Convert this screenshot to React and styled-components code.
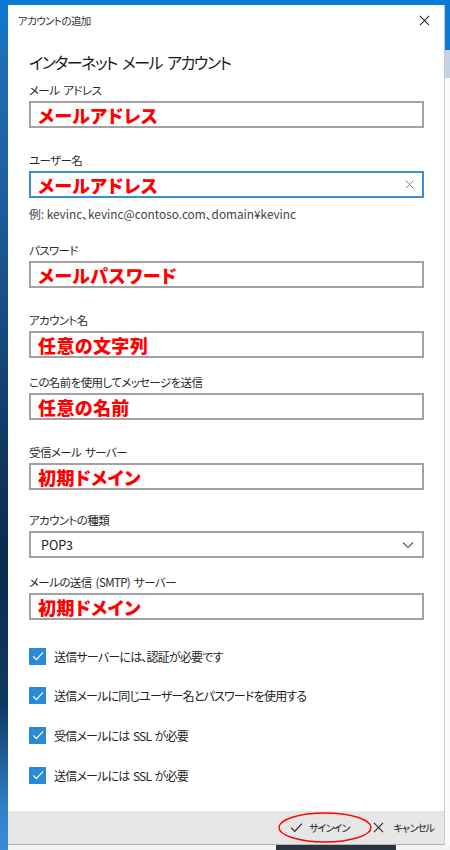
import React from "react";
import styled, { createGlobalStyle } from "styled-components";

const GlobalStyle = createGlobalStyle`
    html, body {
        margin: 0;
        padding: 0;
        background: #f4f4f4;
    }
    body {
        font-family: "Noto Sans CJK JP", "Noto Sans", sans-serif;
        font-feature-settings: "palt";
        color: #222;
    }
`;

// Desktop behind the dialog
const Desktop = styled.div`
    width: 450px;
    height: 850px;
    display: grid;
    grid-template-columns: 8px 437px 5px;
    grid-template-rows: 5px 840px 5px;
    overflow: hidden;
`;

const TopStrip = styled.div`
    grid-column: 1 / 4;
    background: #0a78d7;
`;

const LeftStrip = styled.div`
    grid-row: 2 / 4;
    background: linear-gradient(
        180deg,
        #0a78d7 0px,
        #1f6eb6 50px,
        #1c5d9c 200px,
        #103863 440px,
        #0b2a4d 560px,
        #0f3964 700px,
        #2f80c8 800px,
        #3a8cd4 850px
    );
`;

const RightStrip = styled.div`
    display: flex;
    flex-direction: column;
    background: #fbfbfb;
`;

const RightBlue = styled.div`
    height: 45px;
    background: #0a78d7;
`;

const RightBand = styled.div`
    height: 28px;
    background: #c3d3e3;
`;

const BottomStrip = styled.div`
    grid-column: 2 / 4;
    display: flex;
    background: #f4f4f4;
`;

const BottomPatch = styled.div`
    margin-left: ${(p) => p.$left}px;
    width: ${(p) => p.$width}px;
    background: ${(p) => p.$color};
`;

const Dialog = styled.div`
    display: flex;
    flex-direction: column;
    background: #fff;
    border-right: 1px solid #c9c9c9;
    border-bottom: 1px solid #b5b5b5;
    box-sizing: border-box;
`;

const TitleBar = styled.div`
    height: 31px;
    display: flex;
    align-items: center;
    justify-content: space-between;
    padding: 0 14px 0 10px;
`;

const TitleText = styled.span`
    font-size: 10.5px;
    color: #333;
    letter-spacing: -0.6px;
`;

const Content = styled.div`
    flex: 1;
    padding: 14px 20px 0 21px;
    display: flex;
    flex-direction: column;
`;

const Heading = styled.h1`
    margin: 0;
    font-size: 16px;
    line-height: 24px;
    font-weight: 400;
    letter-spacing: -1.5px;
    word-spacing: 3px;
    color: #1a1a1a;
`;

const FieldBlock = styled.div`
    margin-top: ${(p) => p.$mt}px;
    display: flex;
    flex-direction: column;
`;

const Label = styled.label`
    font-size: 11.5px;
    line-height: 16px;
    letter-spacing: -0.6px;
    word-spacing: 2px;
    color: #2a2a2a;
    margin-bottom: 3px;
`;

const InputBox = styled.div`
    height: 27px;
    box-sizing: border-box;
    border: 2px solid ${(p) => (p.$focused ? "#3b8fd6" : "#a2a2a2")};
    display: flex;
    align-items: center;
    padding: 0 8px 0 7px;
`;

const RedValue = styled.span`
    flex: 1;
    font-size: 18px;
    line-height: 22px;
    font-weight: 800;
    color: #ff0000;
    letter-spacing: 0.4px;
`;

const SelectValue = styled.span`
    flex: 1;
    font-size: 12.5px;
    color: #222;
    padding-left: 3px;
`;

const Hint = styled.div`
    margin-top: 8px;
    font-size: 11.8px;
    line-height: 16px;
    color: #444;
`;

const CheckList = styled.div`
    margin-top: 26px;
    display: flex;
    flex-direction: column;
    gap: 19.7px;
`;

const CheckRow = styled.div`
    height: 20px;
    display: flex;
    align-items: center;
    gap: 8px;
`;

const CheckBox = styled.span`
    width: 17px;
    height: 17px;
    background: #2b8ad6;
    display: flex;
    align-items: center;
    justify-content: center;
`;

const CheckLabel = styled.span`
    font-size: 12px;
    letter-spacing: -0.8px;
    word-spacing: 1.5px;
    color: #222;
`;

const Footer = styled.div`
    height: 33px;
    background: #e6e6e6;
    display: flex;
    align-items: center;
    justify-content: flex-end;
    padding-right: 11px;
    position: relative;
`;

const FooterButton = styled.button`
    border: none;
    background: transparent;
    display: flex;
    align-items: center;
    gap: ${(p) => p.$gap}px;
    padding: 0;
    margin-left: ${(p) => p.$ml}px;
    font-family: inherit;
    font-size: 10px;
    letter-spacing: -2px;
    color: #222;
    cursor: pointer;
`;

const Annotation = styled.svg`
    position: absolute;
    left: 269px;
    top: 0px;
    pointer-events: none;
`;

function CloseIcon({ size = 12, color = "#222", width = 1.1 }) {
    return (
        <svg width={size} height={size} viewBox="0 0 12 12">
            <path d="M1 1 L11 11 M11 1 L1 11" stroke={color} strokeWidth={width} fill="none" />
        </svg>
    );
}

function Check({ size = 12, color = "#fff", width = 1.3 }) {
    return (
        <svg width={size} height={size} viewBox="0 0 12 12">
            <path d="M1.2 6.4 L4.4 9.6 L11 2.4" stroke={color} strokeWidth={width} fill="none" />
        </svg>
    );
}

function Chevron() {
    return (
        <svg width="12" height="8" viewBox="0 0 12 8">
            <path d="M1 1.5 L6 6.5 L11 1.5" stroke="#555" strokeWidth="1.1" fill="none" />
        </svg>
    );
}

const fields = [
    { label: "パスワード", value: "メールパスワード", mt: 20 },
    { label: "アカウント名", value: "任意の文字列", mt: 24 },
    { label: "この名前を使用してメッセージを送信", value: "任意の名前", mt: 16 },
    { label: "受信メール サーバー", value: "初期ドメイン", mt: 24 },
];

const checks = [
    "送信サーバーには、認証が必要です",
    "送信メールに同じユーザー名とパスワードを使用する",
    "受信メールには SSL が必要",
    "送信メールには SSL が必要",
];

export default function App() {
    return (
        <>
            <GlobalStyle />
            <Desktop>
                <TopStrip />
                <LeftStrip />
                <Dialog>
                    <TitleBar>
                        <TitleText>アカウントの追加</TitleText>
                        <CloseIcon size={11} />
                    </TitleBar>
                    <Content>
                        <Heading>インターネット メール アカウント</Heading>

                        <FieldBlock $mt={8}>
                            <Label>メール アドレス</Label>
                            <InputBox>
                                <RedValue>メールアドレス</RedValue>
                            </InputBox>
                        </FieldBlock>

                        <FieldBlock $mt={24}>
                            <Label>ユーザー名</Label>
                            <InputBox $focused>
                                <RedValue>メールアドレス</RedValue>
                                <CloseIcon size={9} color="#777" width={1.2} />
                            </InputBox>
                        </FieldBlock>
                        <Hint>例: kevinc、kevinc@contoso.com、domain¥kevinc</Hint>

                        {fields.map((f) => (
                            <FieldBlock key={f.label} $mt={f.mt}>
                                <Label>{f.label}</Label>
                                <InputBox>
                                    <RedValue>{f.value}</RedValue>
                                </InputBox>
                            </FieldBlock>
                        ))}

                        <FieldBlock $mt={22}>
                            <Label>アカウントの種類</Label>
                            <InputBox>
                                <SelectValue>POP3</SelectValue>
                                <Chevron />
                            </InputBox>
                        </FieldBlock>

                        <FieldBlock $mt={16}>
                            <Label>メールの送信 (SMTP) サーバー</Label>
                            <InputBox>
                                <RedValue>初期ドメイン</RedValue>
                            </InputBox>
                        </FieldBlock>

                        <CheckList>
                            {checks.map((c) => (
                                <CheckRow key={c}>
                                    <CheckBox>
                                        <Check />
                                    </CheckBox>
                                    <CheckLabel>{c}</CheckLabel>
                                </CheckRow>
                            ))}
                        </CheckList>
                    </Content>
                    <Footer>
                        <FooterButton $gap={6} $ml={0}>
                            <Check size={13} color="#222" width={1.1} />
                            サインイン
                        </FooterButton>
                        <FooterButton $gap={9} $ml={24}>
                            <CloseIcon size={11} />
                            キャンセル
                        </FooterButton>
                        <Annotation width="96" height="33" viewBox="0 0 96 33">
                            <ellipse cx="48" cy="16.5" rx="46" ry="14.5" stroke="#ff0000" strokeWidth="1.4" fill="none" />
                        </Annotation>
                    </Footer>
                </Dialog>
                <RightStrip>
                    <RightBlue />
                    <RightBand />
                </RightStrip>
                <BottomStrip>
                    <BottomPatch $left={268} $width={120} $color="#2a3440" />
                </BottomStrip>
            </Desktop>
        </>
    );
}
